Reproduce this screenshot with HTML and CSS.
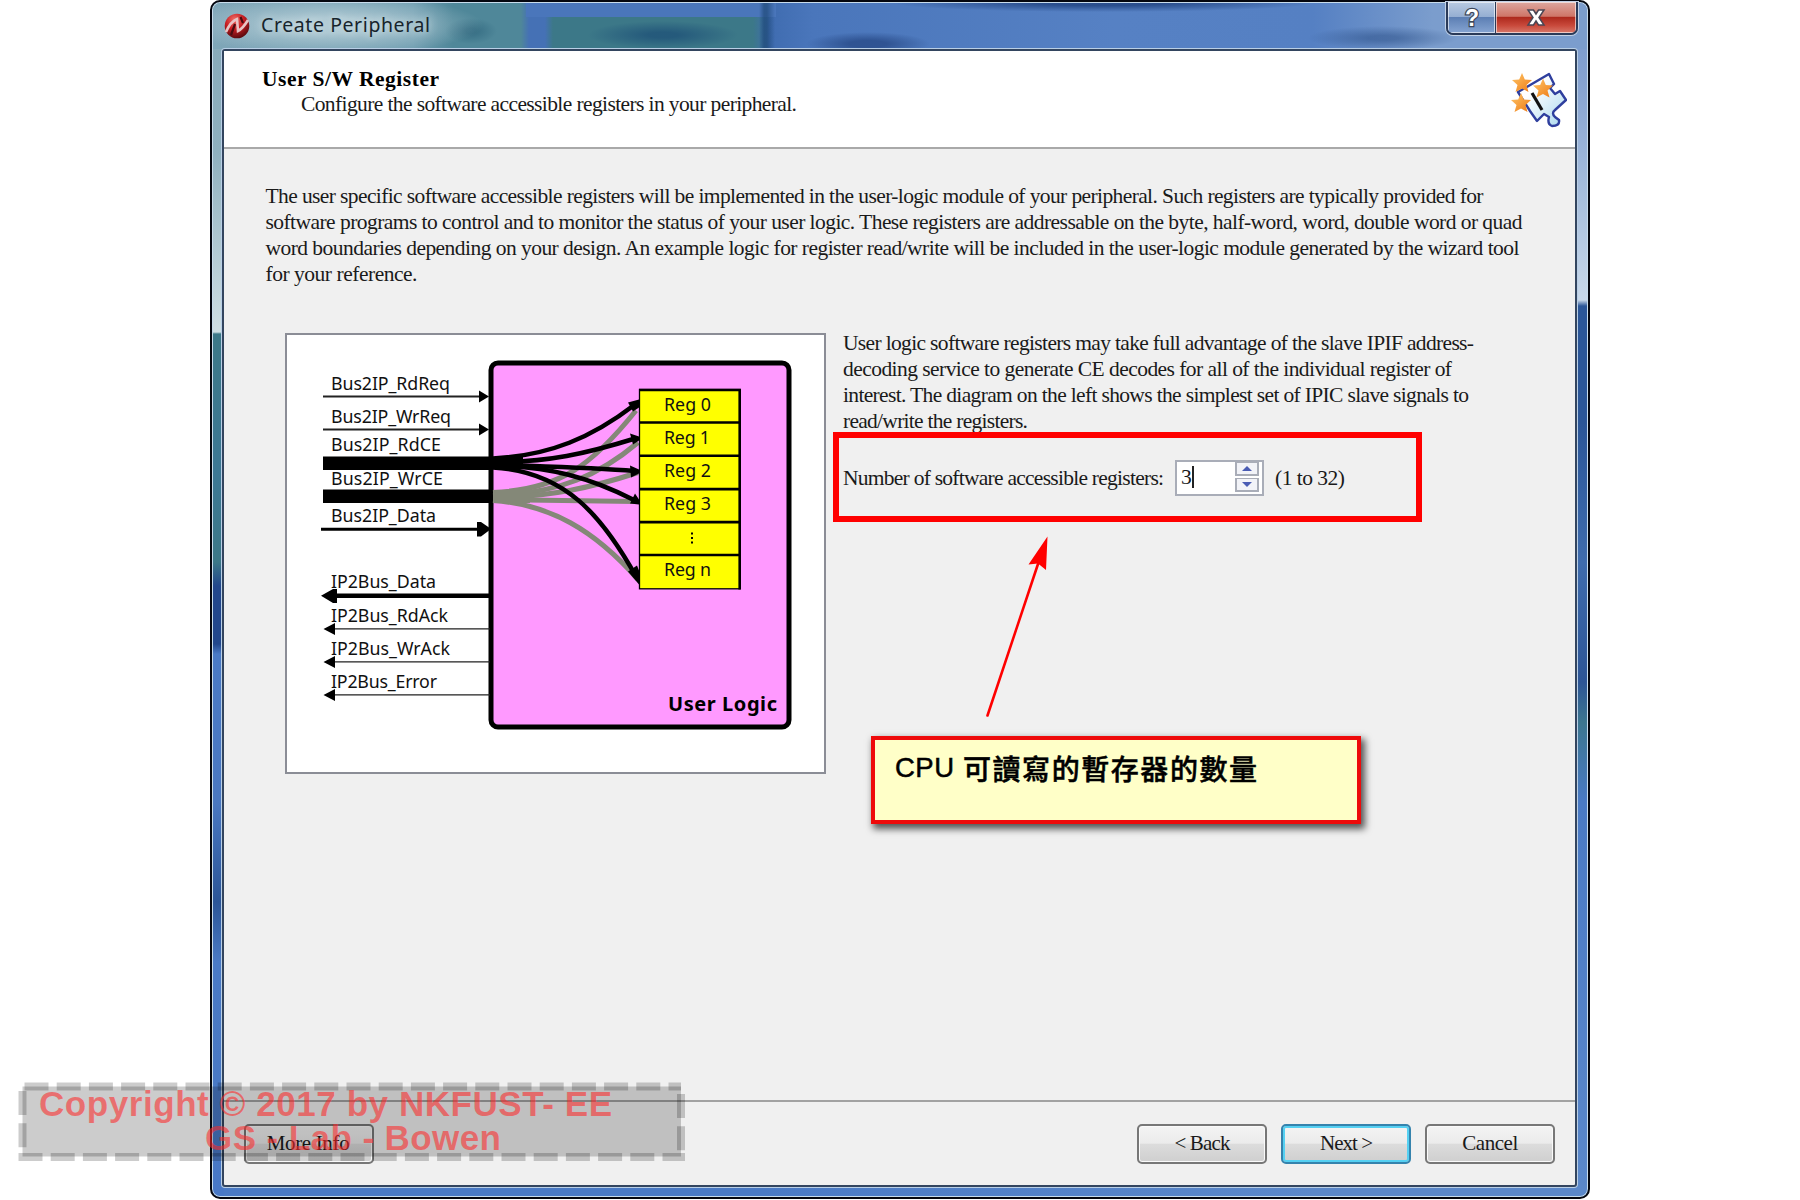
FILE: index.html
```html
<!DOCTYPE html>
<html lang="en">
<head>
<meta charset="utf-8">
<title>Create Peripheral</title>
<link rel="stylesheet" href="styles.css">
</head>
<body>
<div class="window">
  <div class="titlebar">
    <svg class="app-icon" viewBox="0 0 26 26" width="26" height="26">
      <defs><radialGradient id="ball" cx="40%" cy="25%" r="75%"><stop offset="0" stop-color="#f0706a"/><stop offset=".5" stop-color="#c81e22"/><stop offset="1" stop-color="#5c0a0e"/></radialGradient></defs>
      <circle cx="13" cy="13" r="12.3" fill="url(#ball)"/>
      <path d="M2 19 C5 12 8 8 13 6 L14 18 C18 16 21 12 24 7" fill="none" stroke="#e8c4c4" stroke-width="2.6"/>
      <path d="M7 22 L11 11 M16.500 4 L19 10" fill="none" stroke="#4a0c10" stroke-width="2.200"/>
    </svg>
    <span class="caption fit" data-w="169">Create Peripheral</span>
    <div class="controls">
      <span class="ctl help"><svg width="20" height="26" viewBox="0 0 20 26"><text x="10" y="21" text-anchor="middle" class="glyph">?</text></svg></span>
      <span class="ctl close"><svg width="24" height="26" viewBox="0 0 24 26"><path class="cross" d="M4 5h5.500l2.500 4 2.500-4H20l-5 7.500 5 7.500h-5.500l-2.500-4-2.500 4H4l5-7.500z"/></svg></span>
    </div>
  </div>
  <div class="client">
    <header class="header">
      <div class="heading">
        <h1><span class="fit" data-w="177">User S/W Register</span></h1>
        <p><span class="fit" data-w="496">Configure the software accessible registers in your peripheral.</span></p>
      </div>
      <svg class="wizard-icon" width="56" height="56" viewBox="1511 72 56 56">
        <defs>
          <linearGradient id="piece" x1="0" y1="0" x2="1" y2="1"><stop offset=".3" stop-color="#fff"/><stop offset="1" stop-color="#a9d8ee"/></linearGradient>
          <linearGradient id="star" x1="0" y1="0" x2="1" y2="1"><stop offset="0" stop-color="#ffc668"/><stop offset="1" stop-color="#ee7a14"/></linearGradient>
          <path id="s" d="M0-10 2.800-3.500 10-3 4.500 2 6.500 9 0 5.500-6.500 9-4.500 2-10-3-2.800-3.500z"/>
        </defs>
        <path d="M1518 92 L1549 74 L1554 84 L1550 88 L1555 94 L1560 91 L1566 100 L1555 110 Q1551 113 1555 117 L1559 120 Q1560 126 1552 126 Q1547 124 1549 117 L1544 114 L1537 121 L1530 111 Z" fill="url(#piece)" stroke="#2f3f9e" stroke-width="2.4" stroke-linejoin="round"/>
        <path d="M1532 93 L1542 110" stroke="#111" stroke-width="3.200"/>
        <use href="#s" x="1522" y="83" fill="url(#star)"/>
        <use href="#s" x="1543" y="88.500" fill="url(#star)"/>
        <use href="#s" x="1521" y="103" fill="url(#star)"/>
      </svg>
    </header>
    <main class="main">
      <p class="intro">
        <span class="fit" data-w="1218">The user specific software accessible registers will be implemented in the user-logic module of your peripheral. Such registers are typically provided for</span>
        <span class="fit" data-w="1257">software programs to control and to monitor the status of your user logic. These registers are addressable on the byte, half-word, word, double word or quad</span>
        <span class="fit" data-w="1254">word boundaries depending on your design. An example logic for register read/write will be included in the user-logic module generated by the wizard tool</span>
        <span class="fit" data-w="152">for your reference.</span>
      </p>
      <div class="columns">
        <svg class="diagram" width="541" height="441" viewBox="285 333.500 541 441">
          <rect x="286" y="334.500" width="539" height="439" fill="#fff" stroke="#8b8d96" stroke-width="2"/>
          <rect x="491" y="363.500" width="298" height="364" rx="7" fill="#ff99ff" stroke="#000" stroke-width="5"/>
          <g class="sig">
            <text x="331" y="390.200" textLength="119">Bus2IP_RdReq</text>
            <text x="331" y="423" textLength="120">Bus2IP_WrReq</text>
            <text x="331" y="451" textLength="110">Bus2IP_RdCE</text>
            <text x="331" y="485.400" textLength="112">Bus2IP_WrCE</text>
            <text x="331" y="522.200" textLength="105">Bus2IP_Data</text>
            <text x="331" y="588" textLength="105">IP2Bus_Data</text>
            <text x="331" y="622.600" textLength="117">IP2Bus_RdAck</text>
            <text x="331" y="655.600" textLength="119">IP2Bus_WrAck</text>
            <text x="331" y="688.600" textLength="106">IP2Bus_Error</text>
          </g>
          <g stroke="#222" fill="none">
            <path d="M323 397H482M323 430H482" stroke-width="2"/>
            <path d="M321 529.700H482" stroke="#000" stroke-width="3"/>
            <path d="M323 463.800H491M323 496.800H491" stroke="#000" stroke-width="13.500"/>
            <path d="M334 596.300H490" stroke="#000" stroke-width="4.500"/>
            <path d="M333 629.400H490M333 662.400H490M333 695.400H490" stroke-width="1.400"/>
          </g>
          <path d="M479 391V403L489 397zM479 424V436L489 430zM477 522.500V537H481L489 531V528L481 522.500zM321 596.300L333 589.500H337V603.500H333zM323.500 629.400L335 623.400V635.400zM323.500 662.400L335 656.400V668.400zM323.500 695.400L335 689.400V701.400z"/>
          <g fill="none" stroke="#848878" stroke-width="5">
            <path d="M493 493C560 490 592 466 636 411"/>
            <path d="M493 496C560 494 600 475 638 443"/>
            <path d="M493 498C550 498 595 487 638 473"/>
            <path d="M493 500L636 502"/>
            <path d="M493 501C550 505 594 530 638 580"/>
            <path d="M493 497L530 497" stroke-width="13"/>
          </g>
          <g fill="none" stroke="#000" stroke-width="4.500">
            <path d="M493 459C550 456 592 438 635 405"/>
            <path d="M493 462C545 464 590 453 635 439"/>
            <path d="M493 465C545 467 590 468 635 471.500"/>
            <path d="M493 466C550 467 590 478 635 501"/>
            <path d="M493 468C565 472 602 516 636 577"/>
            <path d="M493 463.500L523 463.500" stroke-width="12"/>
          </g>
          <path d="M628 403L639 400V408L633 412zM630 434L639 437V441L633 445zM630 466L639 470V474L631 478zM630 504L635 494L639 500V505zM628 572L637 566L639 571V585z"/>
          <rect x="639.500" y="390" width="100.500" height="199.300" fill="#ff0" stroke="#000" stroke-width="1.300"/>
          <path d="M639 390.500H741M639 423H741M639 456.300H741M639 489.600H741M639 522.600H741M639 555.500H741M739.700 389.500V590" stroke="#000" stroke-width="2.600"/>
          <g class="sig">
            <text x="664" y="411.300" textLength="47">Reg 0</text>
            <text x="664" y="444.500" textLength="46">Reg 1</text>
            <text x="664" y="477.500" textLength="47">Reg 2</text>
            <text x="664" y="510.500" textLength="47">Reg 3</text>
            <text x="664" y="576.300" textLength="47">Reg n</text>
          </g>
          <path d="M691 533h2v2h-2zM691 537.500h2v2h-2zM691 542h2v2h-2z"/>
          <text class="logic" x="668" y="711" textLength="109">User Logic</text>
        </svg>
        <div class="side">
          <p>
            <span class="fit" data-w="631">User logic software registers may take full advantage of the slave IPIF address-</span>
            <span class="fit" data-w="609">decoding service to generate CE decodes for all of the individual register of</span>
            <span class="fit" data-w="626">interest. The diagram on the left shows the simplest set of IPIC slave signals to</span>
            <span class="fit" data-w="185">read/write the registers.</span>
          </p>
          <div class="field">
            <span class="fit" data-w="321">Number of software accessible registers:</span>
            <div class="spin"><span class="value">3</span><span class="caret"></span>
              <div class="arrows"><span class="up"><svg width="10" height="5" viewBox="0 0 10 5"><path d="M0 5L5 0L10 5z" fill="#4a5cb4"/></svg></span><span class="down"><svg width="10" height="5" viewBox="0 0 10 5"><path d="M0 0L5 5L10 0z" fill="#4a5cb4"/></svg></span></div>
            </div>
            <span class="fit" data-w="70">(1 to 32)</span>
          </div>
        </div>
      </div>
    </main>
    <footer class="footer">
      <button class="btn more"><span class="fit" data-w="83">More Info</span></button>
      <button class="btn"><span class="fit" data-w="56">&lt; Back</span></button>
      <button class="btn primary"><span class="fit" data-w="53">Next &gt;</span></button>
      <button class="btn"><span class="fit" data-w="56">Cancel</span></button>
    </footer>
  </div>
</div>

<div class="highlight"></div>
<svg class="pointer" width="70" height="190" viewBox="980 532 70 190"><path d="M987.500 716.500L1039 562" stroke="#f00" stroke-width="2.600" stroke-linecap="round"/><path d="M1047.500 537.500L1046 571L1038 564.500L1028.500 565.500z" fill="#f00"/></svg>
<div class="callout"><span class="fit" data-w="59">CPU</span><span class="fit zh" data-w="294">可讀寫的暫存器的數量</span></div>
<div class="watermark">
  <svg class="dashes" width="668" height="80" viewBox="18 1082 668 80"><rect x="22.500" y="1086.500" width="658.500" height="70" fill="#000" fill-opacity=".2"/><path d="M24.500 1086.500H681M681 1094V1157M18.500 1157H685M22.500 1091V1157" fill="none" stroke="#000" stroke-opacity=".2" stroke-width="8" stroke-dasharray="24 8.200"/></svg>
  <div class="wm-text"><span class="fit" data-w="573">Copyright © 2017 by NKFUST- EE</span><span class="fit" data-w="296">GS - Lab - Bowen</span></div>
</div>
<script src="fit.js"></script>
</body>
</html>
```
FILE: styles.css
```css
* { box-sizing: border-box; }
body { margin: 0; width: 1800px; height: 1200px; overflow: hidden; position: relative; background: #fff; color: #1a1a1a; font: 21.500px/26.1px "Liberation Serif", serif; }
h1, p { margin: 0; }
svg { display: block; }
.fit { white-space: nowrap; display: inline-block; }

.window {
  display: flex; flex-direction: column; width: 1380px; height: 1199px; margin: 0 0 0 210px; padding: 0 11px 10px 10px;
  border: 2px solid #05070f; border-radius: 10px; box-shadow: inset 0 0 0 1px #c8dcec;
  background:
    linear-gradient(90deg, rgba(74,122,197,0) 0 40%, #5b88ca 80%) 0 100% / 100% 11px no-repeat,
    linear-gradient(#85a8b8 0, #8fb0bf 150px, #cfdfe4 330px, #3c7888 332px, #3d7895 470px, #3c7888 560px, #22478c 584px, #22478c 642px, #4a7ac5 652px, #4a78c2 800px, #2b5597 900px, #4a7ac5 960px, #4878c6 100%) 0 0 / 12px 100% no-repeat,
    linear-gradient(#7597cb 0, #86a2d0 80px, #a9c0de 200px, #c8d8ea 298px, #2b5698 304px, #2b5698 420px, #3f6cae 560px, #2d5596 680px, #3c7690 720px, #4a7ac5 800px, #5b88ca 100%) 100% 0 / 14px 100% no-repeat,
    #4a7ac5;
}
.titlebar {
  display: flex; align-items: flex-start; flex: none; height: 46px; margin: 1px -10px 0 -9px; padding-left: 11px; border-radius: 8px 8px 0 0;
  background:
    radial-gradient(ellipse 150px 30px at 120px 22px, rgba(190,212,220,.75) 25%, rgba(190,212,220,0) 100%),
    linear-gradient(90deg, transparent 546px, rgba(24,66,110,.6) 551px 554px, transparent 562px),
    radial-gradient(ellipse 75px 14px at 450px 32px, rgba(22,70,115,.6) 20%, transparent),
    radial-gradient(ellipse 26px 13px at 258px 28px, rgba(35,90,115,.5) 20%, transparent),
    radial-gradient(ellipse 62px 12px at 655px 41px, rgba(32,64,124,.65) 30%, transparent),
    radial-gradient(ellipse 210px 9px at 890px 0, rgba(28,62,124,.75) 30%, transparent),
    radial-gradient(ellipse 75px 12px at 1170px 35px, rgba(38,74,130,.5) 20%, transparent),
    linear-gradient(#4a76bb, #4a76bb) 313px 0 / 250px 14px no-repeat,
    linear-gradient(90deg, #7fa6b8 0, #6f9db0 200px, #4f8799 240px, #4f8799 308px, #4571b5 316px, #4571b5 332px, #3c7888 340px, #3c7888 540px, #3f6cb0 556px, #4a76bb 600px, #5681c4 900px, #5580c3 1100px, #7b9dcd 1220px, #7b9dcd 100%);
}
.app-icon { margin-top: 10px; }
.caption { margin: 8px 0 0 11px; font: 19.500px/27px "Noto Sans", sans-serif; color: #17242c; text-shadow: 0 0 8px #e6f0f2; }
.controls { display: flex; width: 132px; height: 33px; margin: -1px 9px 0 auto; border: 2px solid #2a3a58; border-top: 0; border-radius: 0 0 7px 7px; box-shadow: 0 0 0 1px #c3d2e6; overflow: hidden; }
.ctl { display: flex; align-items: center; justify-content: center; box-shadow: inset 0 0 0 1px rgba(255,255,255,.6); }
.help { width: 48px; background: linear-gradient(#b9cae2, #95aed2 48%, #5d7fb4 50%, #86a5d2); border-right: 1px solid #2a3a58; }
.close { flex: 1; background: linear-gradient(#dda79f, #cf7568 46%, #ae2a1e 50%, #c8483a 75%, #d8786a); }
.glyph { font: bold 23px "Liberation Sans", sans-serif; fill: #fff; stroke: #3d4658; stroke-width: 2.500px; paint-order: stroke; }
.cross { fill: #fff; stroke: #4a4654; stroke-width: 1.500px; }

.client { flex: 1; min-height: 0; display: flex; flex-direction: column; border: 2px solid #33455f; background: #f0f0f0; box-shadow: 0 0 0 1px #b9cfe6; border-radius: 3px; }
.header { flex: none; display: flex; justify-content: space-between; height: 98px; padding: 15px 8px 0 38px; background: #fff; border-bottom: 2px solid #a9a9a9; }
.heading h1 { font-size: 21.500px; line-height: 26px; color: #000; }
.heading p { padding-left: 39px; line-height: 25px; }
.wizard-icon { margin-top: 6px; }

.main { flex: 1; min-height: 0; padding: 33.500px 0 0 41.500px; }
.intro, .side p { display: flex; flex-direction: column; align-items: flex-start; }
.columns { display: flex; align-items: flex-start; margin-top: 46.600px; padding-left: 19.500px; gap: 17px; }
.diagram { flex: none; }
.sig { font: 17.800px "Noto Sans", sans-serif; fill: #111; }
.logic { font: bold 20px "Noto Sans", sans-serif; }
.side { margin-top: -3.500px; }
.field { display: flex; align-items: center; margin-top: 26px; height: 36px; }
.spin { display: flex; align-items: center; width: 89px; height: 36px; margin: 0 11px; padding: 2px 3px 4px 5px; border: 2px solid #a9adb8; background: #fff; }
.value { margin-left: -1px; }
.caret { width: 2px; height: 22px; background: #222; }
.arrows { display: flex; flex-direction: column; gap: 2px; width: 24px; margin-left: auto; }
.up, .down { display: flex; align-items: center; justify-content: center; height: 14px; border: 2px solid #a9adb8; border-top-width: 1px; background: #f2f3f8; }

.footer { flex: none; display: flex; gap: 14px; height: 85px; padding: 22px 20px 0 20px; border-top: 2px solid #a2a2a2; }
.btn { width: 130px; height: 40px; padding: 0 0 2px; border: 2px solid #777; border-radius: 5px; font: 21px/26px "Liberation Serif", serif; color: #1a1a1a; background: linear-gradient(#f4f4f4, #ebebeb 48%, #dcdcdc 50%, #cfcfcf); box-shadow: inset 0 0 0 1px #fafafa; }
.more { margin-right: auto; padding-right: 2px; }
.primary { border-color: #3583ad; box-shadow: inset 0 0 0 2px #55d0f2; }

.highlight { position: absolute; left: 833px; top: 432px; width: 589px; height: 90px; border: 6.500px solid #f00; }
.pointer { position: absolute; left: 980px; top: 531px; }
.callout { position: absolute; left: 871px; top: 736px; width: 490px; height: 88px; display: flex; gap: 9px; padding: 11px 0 0 20px; border: 4px solid #ee0a0a; background: #ffffc8; box-shadow: 3px 4px 7px 1px rgba(0,0,0,.65); font: 27.500px/34px "Liberation Sans", "Noto Sans CJK TC", sans-serif; color: #000; -webkit-text-stroke: .5px #000; }
.zh { font-family: "Noto Sans CJK TC", sans-serif; font-size: 28px; font-weight: 500; }
.watermark { position: absolute; left: 18px; top: 1082px; width: 668px; height: 80px; }
.dashes { position: absolute; left: 0; top: 0; }
.wm-text { position: relative; display: flex; flex-direction: column; align-items: flex-start; padding: 5px 0 0 21px; font: bold 35px/34px "Liberation Sans", sans-serif; color: rgba(255,40,40,.56); }
.wm-text .fit:last-child { margin-left: 166px; }
```
FILE: fit.js
```js
document.querySelectorAll('.fit').forEach(function (el) {
  var count = Array.from(el.textContent).length;
  var gap = (parseFloat(el.dataset.w) - el.getBoundingClientRect().width) / (count - 1);
  el.style.letterSpacing = gap + 'px';
  el.style.width = el.dataset.w + 'px';
});
```
